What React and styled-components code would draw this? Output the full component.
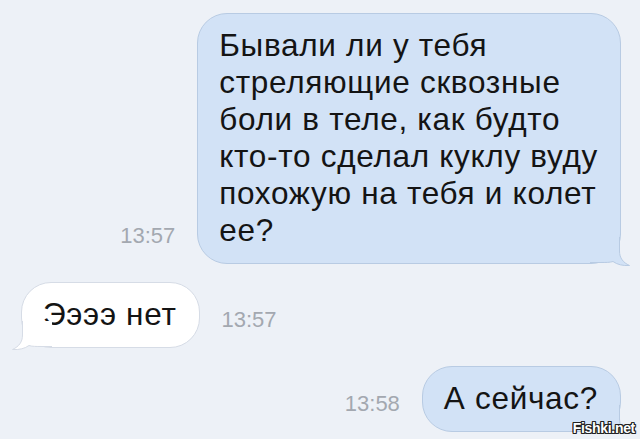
import React from "react";
import styled, { createGlobalStyle } from "styled-components";

const Global = createGlobalStyle`
  html, body { margin: 0; padding: 0; }
  body {
    background: #edf1f7;
    font-family: "Liberation Sans", Arial, sans-serif;
    -webkit-font-smoothing: antialiased;
  }
`;

const Page = styled.div`
  position: relative;
  width: 640px;
  height: 439px;
  box-sizing: border-box;
  padding: 13px 19px 0 21px;
  background: #edf1f7;
  display: flex;
  flex-direction: column;
  gap: 18px;
  overflow: hidden;
`;

const Row = styled.div`
  display: flex;
  justify-content: ${(p) => (p.$out ? "flex-end" : "flex-start")};
  align-items: flex-end;
  gap: 22px;
`;

const Time = styled.span`
  font-size: 22px;
  line-height: 22px;
  color: #a3a8b0;
  margin-bottom: 17px;
`;

const Bubble = styled.div`
  position: relative;
  box-sizing: border-box;
  padding: 13px 22px 14px 21px;
  border-radius: 30px;
  font-size: 31.5px;
  line-height: 37px;
  letter-spacing: 0.7px;
  color: #141414;
  background: ${(p) => (p.$out ? "#d2e2f6" : "#ffffff")};
  border: 1px solid ${(p) => (p.$out ? "#b8cbe3" : "#d6dce6")};
  white-space: nowrap;
`;

const TailSvg = styled.svg`
  position: absolute;
  bottom: -4px;
  ${(p) => (p.$out ? "right: -10px;" : "left: -10px; transform: scaleX(-1);")}
  width: 40px;
  height: 30px;
  overflow: visible;
`;

function Tail({ out }) {
  const fill = out ? "#d2e2f6" : "#ffffff";
  const stroke = out ? "#b8cbe3" : "#d6dce6";
  return (
    <TailSvg $out={out} viewBox="0 0 40 30">
      <path
        d="M0 0 L29.5 0 L29.5 14 C29.5 21 33 25.5 39.5 28.5 C33 29 27 27.5 23 24.5 C20 25.5 16 25.5 10 25.5 L0 25.5 Z"
        fill={fill}
      />
      <path
        d="M29.5 0 L29.5 14 C29.5 21 33 25.5 39.5 28.5 C33 29 27 27.5 23 24.5 C20 25.5 16 25.5 10 25.5 L0 25.5"
        fill="none"
        stroke={stroke}
        strokeWidth="1"
      />
    </TailSvg>
  );
}

const Watermark = styled.div`
  position: absolute;
  right: 5px;
  bottom: 4px;
  font-family: "Liberation Sans", Arial, sans-serif;
  font-weight: bold;
  font-size: 14px;
  line-height: 14px;
  letter-spacing: -0.3px;
  color: #ffffff;
  text-shadow: 1px 0 0 #222, -1px 0 0 #222, 0 1px 0 #222, 0 -1px 0 #222,
    1px 1px 0 #222, -1px -1px 0 #222, 1px -1px 0 #222, -1px 1px 0 #222;
`;

export default function App() {
  return (
    <>
      <Global />
      <Page>
        <Row $out>
          <Time>13:57</Time>
          <Bubble $out>
            Бывали ли у тебя
            <br />
            стреляющие сквозные
            <br />
            боли в теле, как будто
            <br />
            кто-то сделал куклу вуду
            <br />
            похожую на тебя и колет
            <br />
            ее?
            <Tail out />
          </Bubble>
        </Row>
        <Row>
          <Bubble>
            Ээээ нет
            <Tail />
          </Bubble>
          <Time>13:57</Time>
        </Row>
        <Row $out>
          <Time>13:58</Time>
          <Bubble $out>
            А сейчас?
            <Tail out />
          </Bubble>
        </Row>
        <Watermark>Fishki.net</Watermark>
      </Page>
    </>
  );
}
